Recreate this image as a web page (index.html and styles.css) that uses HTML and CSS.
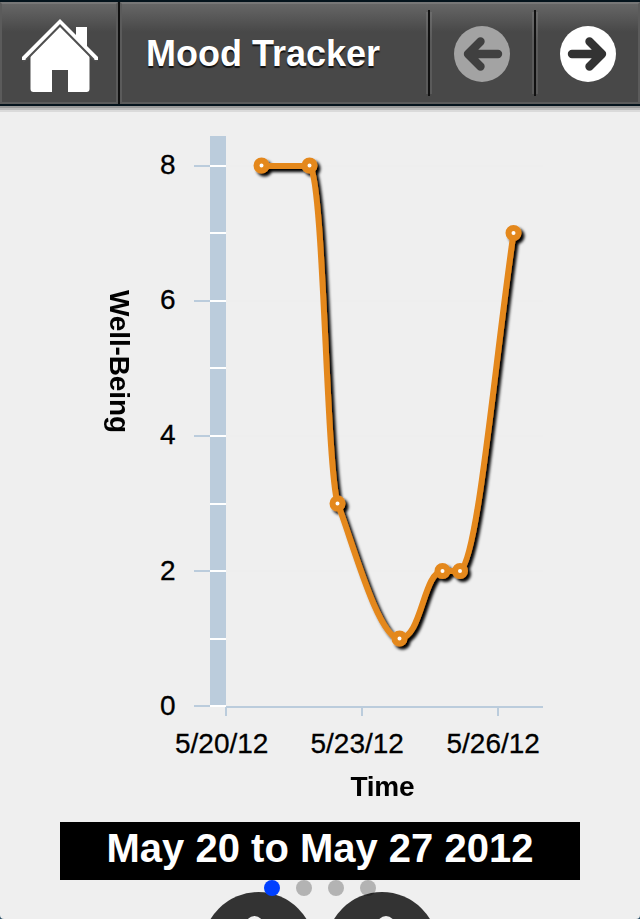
FILE: index.html
```html
<!DOCTYPE html>
<html lang="en">
<head>
    <meta charset="UTF-8">
    <meta name="viewport" content="width=device-width, initial-scale=1.0">
    <title>Mood Tracker</title>
    <link rel="stylesheet" href="styles.css">
</head>
<body>
    <!-- Toolbar -->
    <div class="toolbar">
        <div class="home">
            <svg width="76" height="74" viewBox="0 0 76 74">
                <path d="M54 8h11v25L54 22z" fill="#fff"/>
                <path d="M38 5L67.500 34.500V70q0 3-3 3H46V51H30v22H11.500q-3 0-3-3V34.500z" fill="#fff"/>
                <path d="M1 42.500L38 5.500l37 37" fill="none" stroke="#505050" stroke-width="2.500"/>
                <path d="M38 0l38 38v3h-4L38 6 4 41H0v-3z" fill="#fff"/>
                <path d="M4 41L38 6.500 72 41" fill="none" stroke="#505050" stroke-width="2"/>
            </svg>
        </div>
        <div class="title-bar">
            <h1 class="title">Mood Tracker</h1>
            <div class="nav prev">
                <svg width="56" height="56" viewBox="0 0 56 56">
                    <circle cx="28" cy="28" r="28" fill="#a3a3a3"/>
                    <path d="M26.500 15.500L14 28l12.500 12.500M17 28h27" class="arrow" stroke="#404040"/>
                </svg>
            </div>
            <div class="nav next">
                <svg width="56" height="56" viewBox="0 0 56 56">
                    <circle cx="28" cy="28" r="28" fill="#fff"/>
                    <path d="M29.500 15.500L42 28 29.500 40.500M39 28H12" class="arrow" stroke="#333"/>
                </svg>
            </div>
        </div>
    </div>
    <div class="shadow"></div>

    <!-- Chart -->
    <svg class="chart" width="640" height="710" viewBox="0 112 640 710">
        <defs>
            <filter id="shadow" filterUnits="userSpaceOnUse" x="220" y="130" width="340" height="560">
                <feDropShadow dx="3" dy="3" stdDeviation="1.5" flood-color="#000" flood-opacity="1"/>
            </filter>
        </defs>
        <path d="M226 166H543M226 301H543M226 436H543M226 571H543" stroke="#ededed"/>
        <rect x="210" y="136" width="16" height="571" fill="#bbccdc"/>
        <path d="M194 166h16M194 301h16M194 436h16M194 571h16M194 706h16M226 707h317M226 707v9M362 707v9M498 707v9" class="axis"/>
        <path d="M210 166h16M210 233h16M210 301h16M210 368h16M210 436h16M210 504h16M210 571h16M210 639h16M210 706h16" class="tick"/>

        <g class="label">
            <text x="160" y="174">8</text>
            <text x="160" y="309">6</text>
            <text x="160" y="444">4</text>
            <text x="160" y="580">2</text>
            <text x="160" y="715">0</text>
            <text x="175" y="753">5/20/12</text>
            <text x="310.500" y="753">5/23/12</text>
            <text x="446.500" y="753">5/26/12</text>
        </g>
        <g class="axis-title">
            <text x="350.500" y="796" textLength="64">Time</text>
            <text transform="translate(110 290) rotate(90)" textLength="143">Well-Being</text>
        </g>

        <g filter="url(#shadow)">
            <path class="line" d="M262 166H310C324 184 326 460 337.500 503C352 540 378 638.500 399.500 638.500C422 638.500 423 571 443 571H460C478 560 494 368 513.500 233.500"/>
            <g class="points">
                <circle cx="261.500" cy="165.500" r="5"/>
                <circle cx="309.500" cy="165.500" r="5"/>
                <circle cx="337.500" cy="503.500" r="5"/>
                <circle cx="399.500" cy="638.500" r="5"/>
                <circle cx="442.500" cy="571" r="5"/>
                <circle cx="460" cy="571" r="5"/>
                <circle cx="513.500" cy="233" r="5"/>
            </g>
        </g>
    </svg>

    <div class="range">May 20 to May 27 2012</div>

    <!-- Page dots and bottom buttons -->
    <div class="footer">
        <div class="dots">
            <span class="dot active"></span>
            <span class="dot"></span>
            <span class="dot"></span>
            <span class="dot"></span>
        </div>
        <svg class="buttons" width="640" height="27" viewBox="0 892 640 27">
            <g fill="#333">
                <circle cx="258.500" cy="948" r="56"/>
                <circle cx="382" cy="948" r="56"/>
            </g>
            <g fill="#efefef">
                <circle cx="254.500" cy="925" r="9"/>
                <circle cx="386" cy="925" r="9"/>
            </g>
        </svg>
    </div>
</body>
</html>
```

FILE: styles.css
```css
html {
    background-color: #2b5068;
}
body {
    margin: 0;
    height: 919px;
    overflow: hidden;
    border-radius: 0 0 4px 4px;
    background-color: #efefef;
    font-family: "Liberation Sans", Arial, sans-serif;
}
svg {
    display: block;
}
.toolbar {
    display: flex;
    box-sizing: border-box;
    height: 106px;
    border-top: 2px solid #04131c;
    border-bottom: 2px solid #04131c;
    background: linear-gradient(#686868, #484848 30px, #484848);
}
.home, .title-bar {
    box-sizing: border-box;
    border: 2px solid #5b5b5b;
    border-top-color: #777;
}
.home {
    width: 118px;
    padding: 15px 0 0 20px;
}
.title-bar {
    display: flex;
    flex: 1;
    margin-left: 2px;
    box-shadow: -2px 0 #101010;
}
.title {
    flex: 1;
    margin: 0;
    padding: 29px 0 0 24px;
    color: #fff;
    font-size: 36px;
    line-height: 41px;
    white-space: nowrap;
    text-shadow: 0 2px 1px #111;
}
.nav {
    box-sizing: border-box;
    width: 106px;
    margin: 6px 0;
    padding: 16px 0 0 28px;
    background-image: linear-gradient(#111, #111), linear-gradient(#6c6c6c, #5a5a5a 30px);
    background-position: 2px 0, 0 2px;
    background-size: 2px 100%, 6px 82px;
    background-repeat: no-repeat;
}
.arrow {
    fill: none;
    stroke-width: 8.4;
    stroke-linecap: round;
    stroke-linejoin: round;
}
.shadow {
    height: 6px;
    background: linear-gradient(#999 2px, #bbb 2px, #bbb 4px, #dadada 4px);
}
.axis {
    fill: none;
    stroke: #bbccdc;
    stroke-width: 2;
}
.tick {
    stroke: #fff;
    stroke-width: 2;
}
.label {
    font-size: 28px;
    stroke: #000;
    stroke-width: 0.3;
}
.axis-title {
    font-size: 28px;
    font-weight: bold;
    filter: blur(0.6px);
}
.line {
    fill: none;
    stroke: #e4881f;
    stroke-width: 6;
}
.points {
    fill: #fff;
    stroke: #e4881f;
    stroke-width: 6;
}
.range {
    width: 520px;
    height: 58px;
    margin: 0 auto;
    background-color: #000;
    color: #fff;
    font-size: 40px;
    font-weight: bold;
    line-height: 53px;
    text-align: center;
}
.footer {
    position: relative;
    height: 39px;
}
.buttons {
    position: absolute;
    left: 0;
    bottom: 0;
}
.dots {
    display: flex;
    justify-content: center;
    gap: 16px;
    position: relative;
    z-index: 1;
}
.dot {
    width: 16px;
    height: 16px;
    border-radius: 50%;
    background-color: rgba(0, 0, 0, 0.25);
}
.dot.active {
    background-color: #0040ff;
}
```
